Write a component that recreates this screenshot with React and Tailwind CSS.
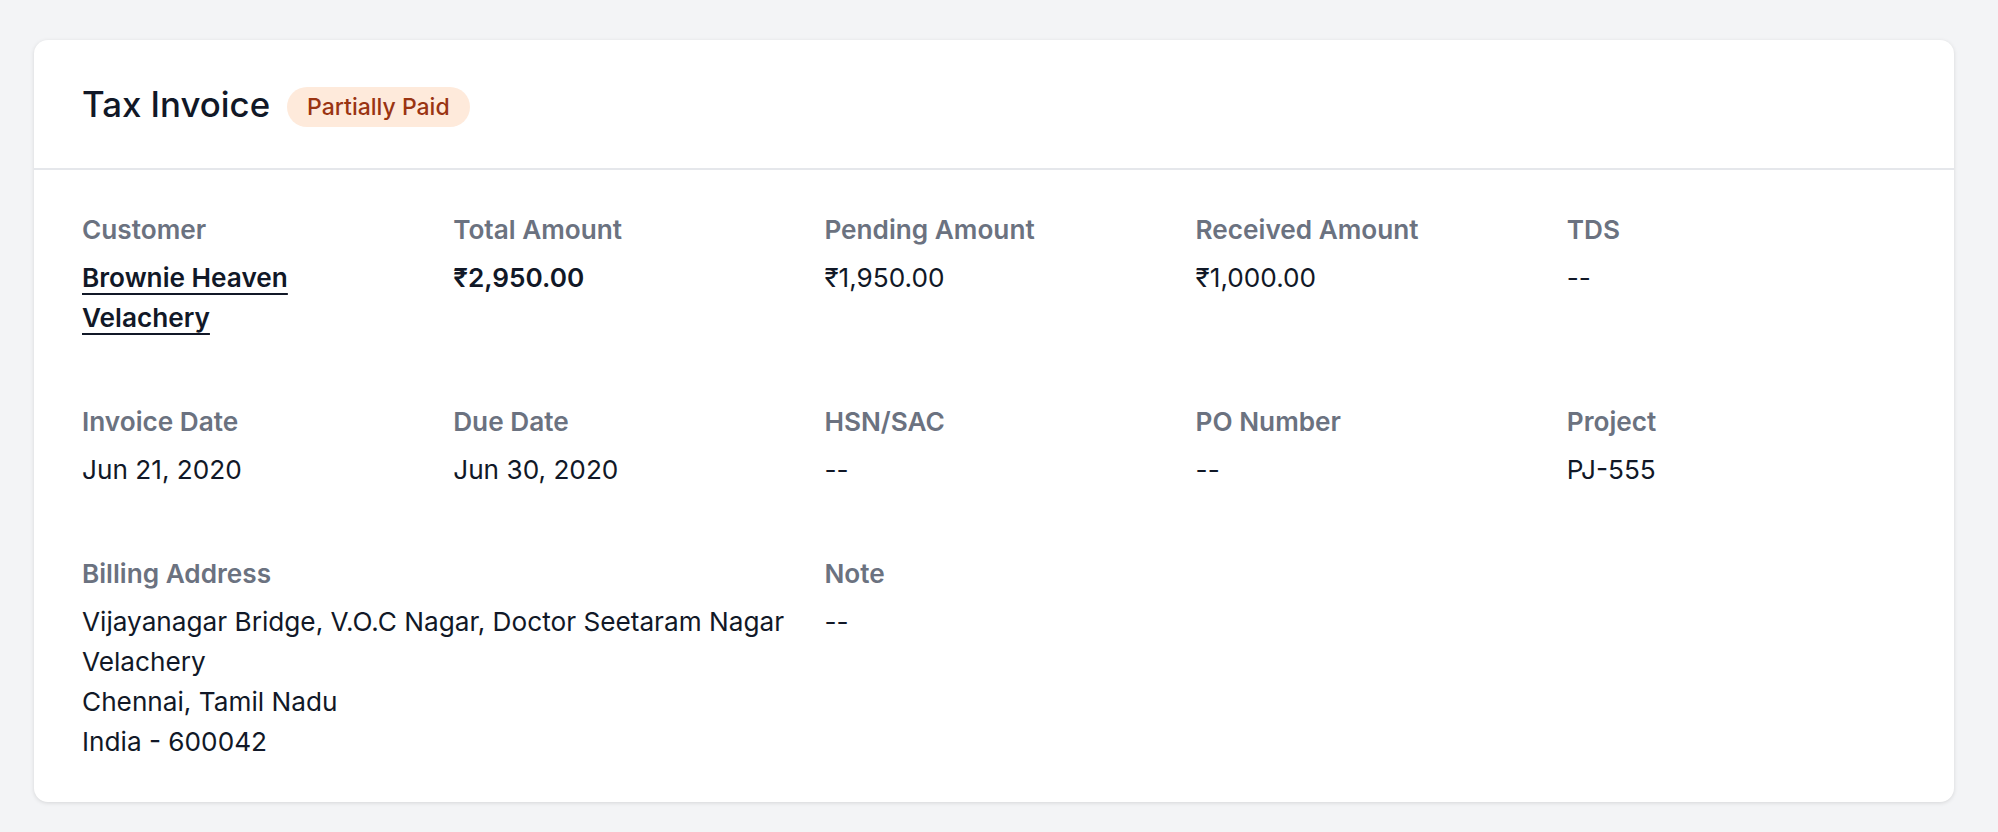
import React from "react";

const fields = [
  { label: "Customer", value: ["Brownie Heaven", "Velachery"], link: true },
  { label: "Total Amount", value: ["₹2,950.00"], bold: true },
  { label: "Pending Amount", value: ["₹1,950.00"] },
  { label: "Received Amount", value: ["₹1,000.00"] },
  { label: "TDS", value: ["--"] },
  { label: "Invoice Date", value: ["Jun 21, 2020"] },
  { label: "Due Date", value: ["Jun 30, 2020"] },
  { label: "HSN/SAC", value: ["--"] },
  { label: "PO Number", value: ["--"] },
  { label: "Project", value: ["PJ-555"] },
];

function Field({ label, children, className = "" }) {
  return (
    <div className={className}>
      <div className="text-[26.2px] leading-[40px] font-semibold text-[#6b7280]">{label}</div>
      <div className="mt-[8px] text-[26.2px] leading-[40px] text-[#111827]">{children}</div>
    </div>
  );
}

export default function App() {
  return (
    <div
      className="min-h-[832px] bg-[#f3f4f6] pt-[40px] pl-[34px]"
      style={{ fontFamily: "Inter, Roboto, sans-serif" }}
    >
      <div className="w-[1920px] bg-white rounded-[14px] shadow-[0_1px_4px_rgba(0,0,0,0.12)]">
        {/* Header */}
        <div className="h-[130px] px-[48px] flex items-center gap-[17px] border-b-2 border-[#e5e7eb]">
          <h1 className="text-[34.8px] font-medium text-[#111827]">Tax Invoice</h1>
          <span className="mt-[6px] h-[40px] px-[20px] flex items-center rounded-full bg-[#feeadb] text-[23px] font-medium text-[#9a3412]">
            Partially Paid
          </span>
        </div>

        {/* Details */}
        <div className="px-[48px] pt-[40px] pb-[40px] grid grid-cols-5 gap-x-[32px] gap-y-[64px]">
          {fields.map((f) => (
            <Field key={f.label} label={f.label}>
              {f.link ? (
                <a href="#" className="font-semibold underline decoration-2 underline-offset-[6px]">
                  {f.value.map((v) => (
                    <span key={v} className="block">
                      {v}
                    </span>
                  ))}
                </a>
              ) : (
                <span className={f.bold ? "font-semibold" : ""}>{f.value[0]}</span>
              )}
            </Field>
          ))}
          <Field label="Billing Address" className="col-span-2">
            <div className="whitespace-nowrap">Vijayanagar Bridge, V.O.C Nagar, Doctor Seetaram Nagar</div>
            <div>Velachery</div>
            <div>Chennai, Tamil Nadu</div>
            <div>India - 600042</div>
          </Field>
          <Field label="Note">--</Field>
        </div>
      </div>
    </div>
  );
}
